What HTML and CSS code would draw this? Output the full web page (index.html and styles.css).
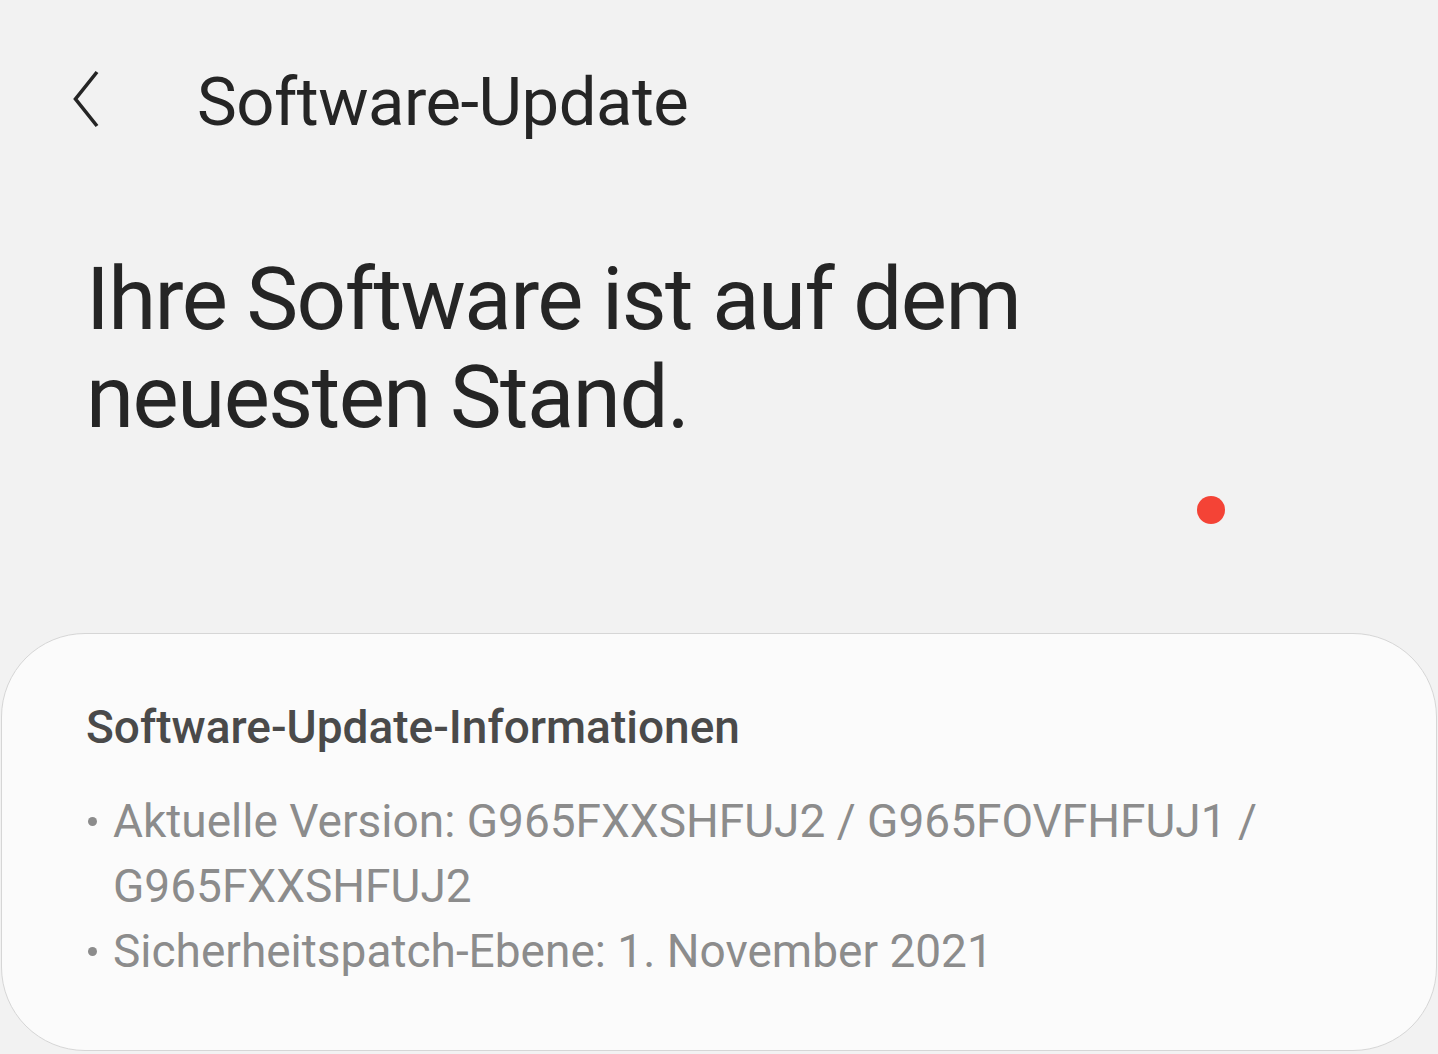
FILE: index.html
```html
<!DOCTYPE html>
<html lang="de">
<head>
  <meta charset="UTF-8">
  <title>Software-Update</title>
  <link rel="stylesheet" href="styles.css">
</head>
<body>

<div class="screen">
  <header class="app-bar">
    <button class="back-btn" aria-label="Zurück">
      <svg width="30" height="60" viewBox="0 0 30 60">
        <path d="M24 2 L2.5 29 L24 56" fill="none" stroke="#252525" stroke-width="3.6"/>
      </svg>
    </button>
    <h1 class="app-title">Software-Update</h1>
  </header>

  <section class="status">
    <h2 class="status-text">Ihre Software ist auf dem neuesten Stand.</h2>
    <div class="dot-row"><span class="dot"></span></div>
  </section>

  <section class="info-card">
    <h3 class="info-title">Software-Update-Informationen</h3>
    <ul class="info-list">
      <li>Aktuelle Version: G965FXXSHFUJ2 / G965FOVFHFUJ1 / G965FXXSHFUJ2</li>
      <li>Sicherheitspatch-Ebene: 1. November 2021</li>
    </ul>
  </section>
</div>

</body>
</html>
```

FILE: styles.css
```css
* {
  margin: 0;
  padding: 0;
  box-sizing: border-box;
}

body {
  font-family: 'Roboto', 'Noto Sans', sans-serif;
  background: #f2f2f2;
  width: 1438px;
  height: 1054px;
  overflow: hidden;
}

.screen {
  display: flex;
  flex-direction: column;
  height: 100%;
}

.app-bar {
  display: flex;
  align-items: center;
  height: 200px;
  padding-left: 73px;
}

.back-btn {
  background: none;
  border: none;
  width: 30px;
  height: 60px;
  display: flex;
  align-items: center;
  cursor: pointer;
}

.app-title {
  font-weight: 400;
  font-size: 67px;
  color: #252525;
  margin: 4px 0 0 94px;
  letter-spacing: -0.5px;
}

.status {
  padding: 50px 0 0 86px;
  height: 433px;
}

.status-text {
  font-weight: 400;
  font-size: 87px;
  line-height: 98px;
  color: #252525;
  width: 1000px;
  letter-spacing: -1.5px;
}

.dot-row {
  display: flex;
  padding: 50px 0 0 1111px;
}

.dot {
  width: 28px;
  height: 28px;
  border-radius: 50%;
  background: #f44336;
}

.info-card {
  flex: 1;
  margin: 0 1px 3px 1px;
  background: #fbfbfb;
  border: 1px solid #d6d6d6;
  border-radius: 84px;
  padding: 66px 84px 0 84px;
}

.info-title {
  font-weight: 500;
  font-size: 46px;
  color: #4a4a4a;
}

.info-list {
  list-style: none;
  margin-top: 35px;
}

.info-list li {
  position: relative;
  padding-left: 27px;
  font-size: 46px;
  line-height: 65px;
  color: #8c8c8c;
  width: 1220px;
}

.info-list li::before {
  content: '';
  position: absolute;
  left: 2px;
  top: 28px;
  width: 9px;
  height: 9px;
  border-radius: 50%;
  background: #8c8c8c;
}
```
